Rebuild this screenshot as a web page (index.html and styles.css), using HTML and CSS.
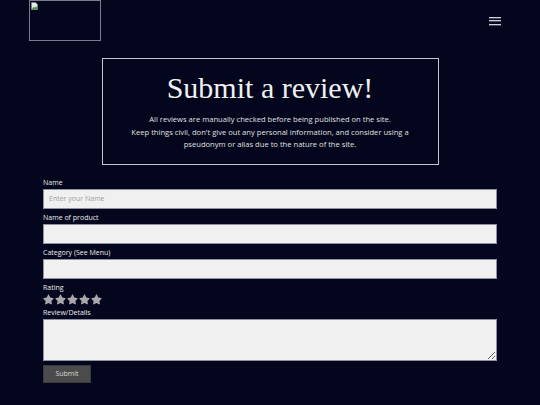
FILE: index.html
```html
<!DOCTYPE html>
<html lang="en">
<head>
  <meta charset="UTF-8" />
  <title>Submit a review</title>
  <link rel="stylesheet" href="styles.css">
</head>
<body>

  <header class="topbar">
    <div class="logo">
      <svg class="broken-img" width="7" height="8" viewBox="0 0 7 8">
        <path d="M0.5 0.5h4l2 2v5h-6z" fill="#e8e8e8" stroke="#8a8a8a" stroke-width="0.6"/>
        <path d="M1 7l1.6-2.2 1.2 1 1.4-1.6L6.5 5.6V7.2H1z" fill="#3c9a3c"/>
      </svg>
    </div>
    <button class="menu-btn" aria-label="Menu">
      <span></span><span></span><span></span>
    </button>
  </header>

  <section class="hero">
    <h1 class="hero-title">Submit a review!</h1>
    <p class="hero-text">
      All reviews are manually checked before being published on the site.<br>
      Keep things civil, don't give out any personal information, and consider using a pseudonym or alias due to the nature of the site.
    </p>
  </section>

  <form class="review-form" onsubmit="return false;">
    <label for="name">Name</label>
    <input type="text" id="name" placeholder="Enter your Name" />

    <label for="product">Name of product</label>
    <input type="text" id="product" />

    <label for="category">Category (See Menu)</label>
    <input type="text" id="category" />

    <label>Rating</label>
    <div class="stars">
      <svg viewBox="0 0 576 512"><path d="M259.3 17.8L194 150.2 47.9 171.5c-26.2 3.8-36.7 36.1-17.7 54.6l105.7 103-25 145.5c-4.5 26.300 23.2 46 46.4 33.7L288 439.6l130.7 68.7c23.2 12.2 50.9-7.4 46.4-33.7l-25-145.5 105.7-103c19-18.5 8.5-50.8-17.7-54.6L382 150.2 316.7 17.8c-11.7-23.6-45.6-23.9-57.4 0z"/></svg>
      <svg viewBox="0 0 576 512"><path d="M259.3 17.8L194 150.2 47.9 171.5c-26.2 3.8-36.7 36.1-17.7 54.6l105.7 103-25 145.5c-4.5 26.3 23.2 46 46.4 33.7L288 439.6l130.7 68.7c23.2 12.2 50.9-7.4 46.4-33.7l-25-145.5 105.7-103c19-18.5 8.5-50.8-17.7-54.6L382 150.2 316.7 17.8c-11.7-23.6-45.6-23.9-57.4 0z"/></svg>
      <svg viewBox="0 0 576 512"><path d="M259.3 17.8L194 150.2 47.9 171.5c-26.2 3.8-36.7 36.1-17.7 54.6l105.7 103-25 145.5c-4.5 26.3 23.2 46 46.4 33.7L288 439.6l130.7 68.7c23.2 12.2 50.9-7.4 46.4-33.7l-25-145.5 105.7-103c19-18.5 8.5-50.8-17.7-54.6L382 150.2 316.7 17.8c-11.7-23.6-45.6-23.9-57.4 0z"/></svg>
      <svg viewBox="0 0 576 512"><path d="M259.3 17.8L194 150.2 47.9 171.5c-26.2 3.8-36.7 36.1-17.7 54.6l105.7 103-25 145.5c-4.5 26.3 23.2 46 46.4 33.7L288 439.6l130.7 68.7c23.2 12.2 50.9-7.4 46.4-33.7l-25-145.5 105.7-103c19-18.5 8.5-50.8-17.7-54.6L382 150.2 316.7 17.8c-11.7-23.6-45.6-23.9-57.4 0z"/></svg>
      <svg viewBox="0 0 576 512"><path d="M259.3 17.8L194 150.2 47.9 171.5c-26.2 3.8-36.7 36.1-17.7 54.6l105.7 103-25 145.5c-4.5 26.3 23.2 46 46.4 33.7L288 439.6l130.7 68.7c23.2 12.2 50.9-7.4 46.4-33.7l-25-145.5 105.7-103c19-18.5 8.5-50.8-17.7-54.6L382 150.2 316.7 17.8c-11.7-23.6-45.6-23.9-57.4 0z"/></svg>
    </div>

    <label for="details">Review/Details</label>
    <textarea id="details"></textarea>

    <button type="submit" class="submit-btn">Submit</button>
  </form>

</body>
</html>
```

FILE: styles.css
```css
body {
  background: #03061d;
  font-family: 'Open Sans', sans-serif;
  color: #e6e6e6;
  margin: 0;
}

.topbar {
  display: flex;
  justify-content: space-between;
  align-items: center;
  padding: 0 39px 0 29px;
}

.logo {
  width: 70px;
  height: 39px;
  border: 1px solid #7a7c90;
}

.broken-img {
  display: block;
  margin: 1px 0 0 1px;
}

.menu-btn {
  background: none;
  border: none;
  padding: 0;
  width: 12px;
  display: flex;
  flex-direction: column;
  gap: 2.5px;
  cursor: pointer;
}

.menu-btn span {
  display: block;
  height: 1px;
  background: #d0d0d8;
  box-shadow: 0 0.5px 0 #8c8ea0;
}

.hero {
  width: 335px;
  margin: 17px auto 0;
  border: 1px solid #c4c5d0;
  text-align: center;
  padding: 11px 0 13px;
}

.hero-title {
  font-family: 'Liberation Serif', 'Times New Roman', serif;
  font-weight: normal;
  font-size: 30px;
  line-height: 36px;
  margin: 0 0 7px;
  color: #f0f0f0;
}

.hero-text {
  font-size: 7.6px;
  line-height: 12.5px;
  margin: 0 auto;
  width: 300px;
  color: #e0e0e0;
}

.review-form {
  width: 454px;
  margin: 13px auto 0;
  display: flex;
  flex-direction: column;
  align-items: flex-start;
}

.review-form label {
  font-size: 7px;
  line-height: 10px;
  margin-bottom: 1px;
  color: #ececec;
}

.review-form input,
.review-form textarea {
  box-sizing: border-box;
  width: 100%;
  height: 20px;
  margin: 0 0 4px;
  padding: 0 5px;
  border: 1px solid #8e90a4;
  background: #f0f0f0;
  font-family: 'Open Sans', sans-serif;
  font-size: 7px;
  color: #222;
}

.review-form input::placeholder {
  color: #a0a0a0;
}

.review-form textarea {
  height: 42px;
  margin-bottom: 4px;
  resize: vertical;
}

.stars {
  display: flex;
  gap: 1px;
  height: 11px;
  margin: 0 0 3px 0;
}

.stars svg {
  width: 11px;
  height: 11px;
  fill: #a9a9ad;
}

.submit-btn {
  background: #4b4b4b;
  border: 1px solid #3a3a3a;
  color: #d8d8d8;
  font-family: 'Open Sans', sans-serif;
  font-size: 7px;
  width: 48px;
  height: 18px;
  padding: 0;
  cursor: pointer;
}
```
